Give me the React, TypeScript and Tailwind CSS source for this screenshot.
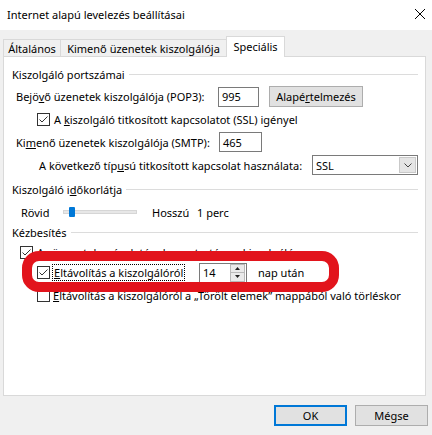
import React from "react";

function Check({ checked }: { checked: boolean }) {
  return (
    <span className="w-[13px] h-[13px] shrink-0 border border-[#333333] bg-white flex items-center justify-center">
      {checked && (
        <svg width="11" height="11" viewBox="0 0 11 11">
          <polyline points="1.5,5.5 4,8 9.5,2.5" fill="none" stroke="#333333" strokeWidth="1" />
        </svg>
      )}
    </span>
  );
}

function GroupTitle({ children }: { children: React.ReactNode }) {
  return (
    <div className="flex items-center">
      <span>{children}</span>
      <span className="flex-1 h-px bg-[#dcdcdc] ml-[4px]" />
    </div>
  );
}

export default function App() {
  return (
    <div className="relative w-[432px] h-[435px] overflow-hidden bg-[#f0f0f0] text-[11px] leading-none text-black font-['Noto_Sans','Open_Sans',sans-serif]">
      {/* title bar */}
      <div className="h-[30px] bg-white flex items-center justify-between">
        <span className="pl-[7px] pb-[1px]">Internet alapú levelezés beállításai</span>
        <svg width="10" height="10" viewBox="0 0 10 10" className="mr-[7px] mb-[3px]">
          <line x1="0" y1="0" x2="10" y2="10" stroke="#000" strokeWidth="1" />
          <line x1="10" y1="0" x2="0" y2="10" stroke="#000" strokeWidth="1" />
        </svg>
      </div>

      {/* tabs */}
      <div className="h-[26px] flex items-end pl-[3px]">
        <div className="w-[57px] h-[17px] border-l border-t border-[#d9d9d9] flex items-center justify-center">
          Általános
        </div>
        <div className="w-[166px] h-[17px] border-l border-t border-[#d9d9d9] flex items-center justify-center">
          Kimenő üzenetek kiszolgálója
        </div>
        <div className="relative z-10 -mb-px w-[59px] h-[21px] bg-white border-l border-t border-r border-[#d9d9d9] flex items-center justify-center pb-[2px]">
          Speciális
        </div>
      </div>

      {/* panel */}
      <div className="ml-[3px] w-[423px] h-[340px] bg-white border border-[#d9d9d9] pt-[7px] pl-[8px] pr-[7px]">
        <div className="h-[21px] flex flex-col justify-center">
          <GroupTitle>Kiszolgáló portszámai</GroupTitle>
        </div>

        <div className="h-[23px] flex items-center">
          <span className="ml-[4px] w-[202px]">
            Bejö<span className="underline">v</span>ő üzenetek kiszolgálója (POP3):
          </span>
          <div className="w-[41px] h-[20px] border border-[#7a7a7a] flex items-center pl-[3px]">995</div>
          <button className="ml-[10px] w-[94px] h-[21px] bg-[#e1e1e1] border border-[#adadad] flex items-center justify-center">
            Alapé<span className="underline">r</span>telmezés
          </button>
        </div>

        <div className="h-[23px] flex items-center">
          <span className="ml-[25px]">
            <Check checked />
          </span>
          <span className="ml-[4px]">
            A <span className="underline">k</span>iszolgáló titkosított kapcsolatot (SSL) igényel
          </span>
        </div>

        <div className="h-[22px] flex items-center">
          <span className="ml-[4px] w-[203px]">
            Ki<span className="underline">m</span>enő üzenetek kiszolgálója (SMTP):
          </span>
          <div className="w-[43px] h-[20px] border border-[#7a7a7a] flex items-center pl-[3px]">465</div>
        </div>

        <div className="h-[24px] flex items-center">
          <span className="ml-[27px] w-[273px]">
            A következő típ<span className="underline">u</span>sú titkosított kapcsolat használata:
          </span>
          <div className="w-[106px] h-[20px] border border-[#7a7a7a] flex items-center justify-between pl-[3px] pr-px">
            <span>SSL</span>
            <span className="w-[17px] h-[16px] bg-[#e5e5e5] border border-[#c9c9c9] flex items-center justify-center">
              <svg width="8" height="5" viewBox="0 0 8 5">
                <polyline points="0.5,0.5 4,4 7.5,0.5" fill="none" stroke="#444" strokeWidth="1" />
              </svg>
            </span>
          </div>
        </div>

        <div className="h-[25px] flex flex-col justify-center">
          <GroupTitle>
            Kiszolgáló i<span className="underline">d</span>őkorlátja
          </GroupTitle>
        </div>

        <div className="h-[20px] flex items-center">
          <span className="ml-[9px] w-[42px]">Rövid</span>
          <span className="relative w-[74px] h-[4px] bg-[#e7e7e7] border border-[#d6d6d6]">
            <span className="absolute left-[5px] -top-[4px] w-[6px] h-[10px] rounded-[1px] bg-[#0078d7]" />
          </span>
          <span className="ml-[15px] w-[45px]">Hosszú</span>
          <span>1 perc</span>
        </div>

        <div className="h-[21px] flex flex-col justify-center">
          <GroupTitle>Kézbesítés</GroupTitle>
        </div>

        <div className="h-[18px] flex items-center">
          <span className="ml-[8px]">
            <Check checked />
          </span>
          <span className="ml-[4px]">Az üzenetek másolatának megtartása a kiszolgálón</span>
        </div>

        <div className="h-[23px] flex items-center">
          <span className="ml-[25px]">
            <Check checked />
          </span>
          <span className="ml-[2px] w-[133px] h-[17px] border border-dotted border-black flex items-center pl-px">
            <span className="underline">E</span>ltávolítás a kiszolgálóról
          </span>
          <div className="ml-[14px] w-[48px] h-[20px] border border-[#7a7a7a] flex items-center justify-between pl-[3px] pr-px">
            <span>14</span>
            <span className="flex flex-col gap-0">
              <span className="w-[15px] h-[9px] bg-[#eaeaea] border border-[#b9b9b9] flex items-center justify-center">
                <svg width="5" height="3" viewBox="0 0 5 3"><polygon points="0,3 2.5,0 5,3" fill="#222" /></svg>
              </span>
              <span className="w-[15px] h-[9px] bg-[#eaeaea] border border-[#b9b9b9] border-t-0 flex items-center justify-center">
                <svg width="5" height="3" viewBox="0 0 5 3"><polygon points="0,0 5,0 2.5,3" fill="#222" /></svg>
              </span>
            </span>
          </div>
          <span className="ml-[11px]">nap után</span>
        </div>

        <div className="h-[22px] flex items-center">
          <span className="ml-[25px]">
            <Check checked={false} />
          </span>
          <span className="ml-[3px]">
            <span className="underline">E</span>ltávolítás a kiszolgálóról a „Törölt elemek” mappából való törléskor
          </span>
        </div>
      </div>

      {/* buttons */}
      <div className="flex justify-end gap-[8px] pr-[4px] pt-[9px]">
        <button className="w-[73px] h-[21px] bg-[#e1e1e1] border-2 border-[#0078d7] flex items-center justify-center">
          OK
        </button>
        <button className="w-[73px] h-[21px] bg-[#e1e1e1] border border-[#adadad] flex items-center justify-center">
          Mégse
        </button>
      </div>

      {/* red annotation ring */}
      <div className="absolute left-[22px] top-[251px] w-[317px] h-[41px] rounded-[17px] border-[10px] border-[#e2141c] pointer-events-none" />
    </div>
  );
}
